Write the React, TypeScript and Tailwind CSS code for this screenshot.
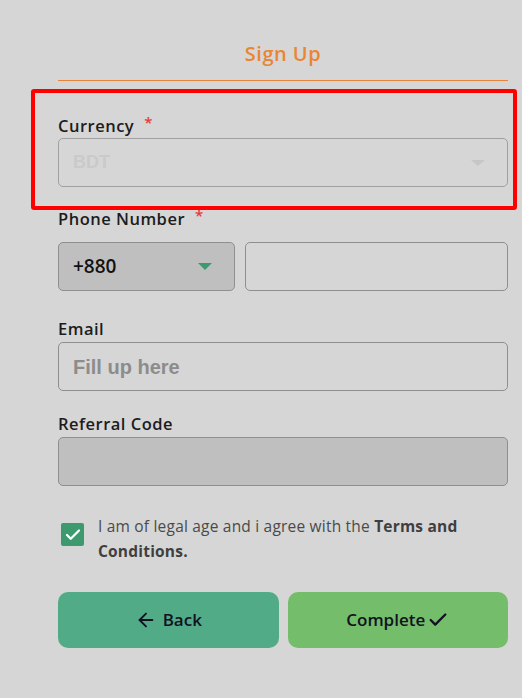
import { ArrowLeft, Check } from "lucide-react";

const Label = ({ text, required }: { text: string; required?: boolean }) => (
  <div className="flex items-center h-5 text-[16.5px] font-semibold tracking-[0.5px] text-[#1c1c1c]">
    {text}
    {required && <span className="ml-[10px] text-[#e53935] text-[15px] -mt-2">*</span>}
  </div>
);

const App = () => {
  return (
    <div
      className="relative min-h-[698px] w-full bg-[#d6d6d6] pl-[58px] pr-[14px] pt-[39px]"
      style={{ fontFamily: "'Open Sans', Lato, sans-serif" }}
    >
      <h1 className="h-[26px] text-center text-[20px] font-semibold text-[#ea8532] tracking-wide">
        Sign Up
      </h1>
      <div className="mt-[15px] h-px bg-[#e8843a]"></div>

      <div className="mt-[35px]">
        <Label text="Currency" required />
        <div className="mt-[2px] flex h-[49px] items-center justify-between rounded-[5px] border border-[#a0a0a0] px-[14px]">
          <span className="text-[18px] font-bold text-[#cacaca]" style={{ fontFamily: "'Liberation Sans', Arial, sans-serif" }}>BDT</span>
          <span className="mr-[8px] h-0 w-0 border-x-[7px] border-t-[6px] border-x-transparent border-t-[#c6c6c6]"></span>
        </div>
      </div>

      <div className="mt-[22px]">
        <Label text="Phone Number" required />
        <div className="mt-[13px] flex gap-[10px]">
          <div className="flex h-[49px] w-[177px] items-center justify-between rounded-[5px] border border-[#8f8f8f] bg-[#bfbfbf] pl-[14px] pr-[22px]">
            <span className="text-[19px] font-semibold text-[#111]">+880</span>
            <span className="h-0 w-0 border-x-[7px] border-t-[7px] border-x-transparent border-t-[#3d9a6f]"></span>
          </div>
          <div className="h-[49px] flex-1 rounded-[5px] border border-[#8f8f8f]"></div>
        </div>
      </div>

      <div className="mt-[28px]">
        <Label text="Email" />
        <div className="mt-[3px] flex h-[49px] items-center rounded-[5px] border border-[#8f8f8f] px-[14px]">
          <span className="text-[20px] font-bold text-[#8c8c8c]" style={{ fontFamily: "'Liberation Sans', Arial, sans-serif" }}>Fill up here</span>
        </div>
      </div>

      <div className="mt-[23px]">
        <Label text="Referral Code" />
        <div className="mt-[3px] h-[49px] rounded-[5px] border border-[#8f8f8f] bg-[#bfbfbf]"></div>
      </div>

      <div className="mt-[36px] flex items-start gap-[14px] pl-[3px]">
        <div className="mt-[1px] flex h-[23px] w-[23px] shrink-0 items-center justify-center rounded-[2px] bg-[#3c9a6e]">
          <Check size={18} strokeWidth={3} className="text-white" />
        </div>
        <p className="text-[15.5px] leading-[25px] font-medium tracking-[0.2px] text-[#4a4a4a] -mt-[8px]">
          <span>I am of legal age and i agree with the </span>
          <b className="font-bold text-[#3f3f3f]">Terms and</b>{" "}
          <b className="font-bold text-[#3f3f3f]">Conditions.</b>
        </p>
      </div>

      <div className="mt-[28px] flex gap-[9px]">
        <button className="flex h-[56px] flex-1 items-center justify-center gap-[6px] rounded-[10px] bg-[#52ab87] text-[17px] font-semibold text-[#112]">
          <ArrowLeft size={22} strokeWidth={2} />
          Back
        </button>
        <button className="flex h-[56px] flex-1 items-center justify-center gap-[2px] rounded-[10px] bg-[#74bd6a] text-[17px] font-semibold text-[#112]">
          Complete
          <Check size={22} strokeWidth={2.5} />
        </button>
      </div>

      <div className="pointer-events-none absolute left-[31px] top-[89px] h-[121px] w-[486px] rounded-[3px] border-4 border-[#ff0000]"></div>
    </div>
  );
};

export default App;
